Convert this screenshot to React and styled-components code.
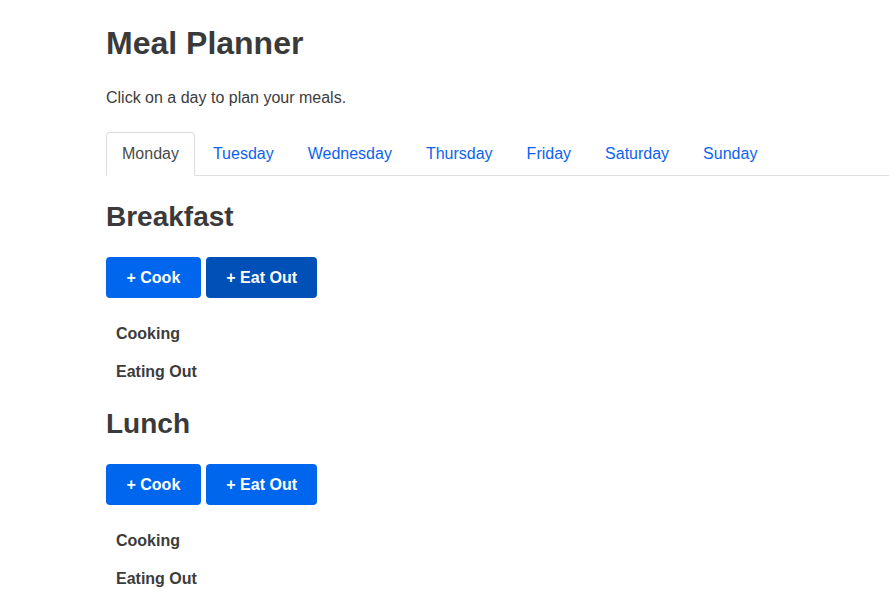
import React, { useState } from 'react';
import styled, { createGlobalStyle } from 'styled-components';

const GlobalStyle = createGlobalStyle`
  body {
    margin: 0;
    font-family: "Liberation Sans", Arial, sans-serif;
    color: #3c3c3c;
    background: #fff;
  }
`;

const Page = styled.div`
  padding: 20px 0 0 106px;
`;

const Title = styled.h1`
  margin: 0;
  font-size: 32px;
  line-height: 46px;
  font-weight: 700;
  color: #3a3a3a;
`;

const Subtitle = styled.p`
  margin: 20px 0 0;
  font-size: 16px;
  line-height: 24px;
  color: #3c3c3c;
`;

const Tabs = styled.ul`
  display: flex;
  list-style: none;
  margin: 22px 0 0;
  padding: 0;
  border-bottom: 1px solid #dedede;
`;

const Tab = styled.li`
  margin: 0 2px -1px 0;
  padding: 10px 15px;
  font-size: 16px;
  line-height: 22px;
  border: 1px solid ${p => (p.$active ? '#dedede' : 'transparent')};
  border-bottom-color: ${p => (p.$active ? '#fff' : 'transparent')};
  border-radius: 4px 4px 0 0;
  background: ${p => (p.$active ? '#fff' : 'transparent')};
  color: ${p => (p.$active ? '#4a4a4a' : '#0d63f0')};
  cursor: pointer;
`;

const Section = styled.section`
  margin-top: 21px;

  & + & {
    margin-top: 20px;
  }
`;

const MealTitle = styled.h2`
  margin: 0;
  font-size: 28px;
  line-height: 40px;
  font-weight: 700;
  color: #3a3a3a;
`;

const ButtonRow = styled.div`
  display: flex;
  gap: 5px;
  margin-top: 20px;
`;

const Button = styled.button`
  height: 41px;
  padding: 0 20.5px;
  border: none;
  border-radius: 4px;
  background: ${p => (p.$active ? '#0050b8' : '#0066ee')};
  color: #fff;
  font-family: "Liberation Sans", Arial, sans-serif;
  font-size: 16px;
  font-weight: 700;
  cursor: pointer;
`;

const List = styled.div`
  display: flex;
  flex-direction: column;
  gap: 14px;
  margin-top: 24px;
  padding-left: 10px;
`;

const Item = styled.div`
  font-size: 16px;
  line-height: 24px;
  font-weight: 700;
  color: #3c3c3c;
`;

const days = ['Monday', 'Tuesday', 'Wednesday', 'Thursday', 'Friday', 'Saturday', 'Sunday'];
const meals = [
  { name: 'Breakfast', active: 'eat' },
  { name: 'Lunch', active: null },
];

function Meal({ name, active }) {
  return (
    <Section>
      <MealTitle>{name}</MealTitle>
      <ButtonRow>
        <Button $active={active === 'cook'}>+ Cook</Button>
        <Button $active={active === 'eat'}>+ Eat Out</Button>
      </ButtonRow>
      <List>
        <Item>Cooking</Item>
        <Item>Eating Out</Item>
      </List>
    </Section>
  );
}

export default function App() {
  const [day, setDay] = useState('Monday');
  return (
    <Page>
      <GlobalStyle />
      <Title>Meal Planner</Title>
      <Subtitle>Click on a day to plan your meals.</Subtitle>
      <Tabs>
        {days.map(d => (
          <Tab key={d} $active={d === day} onClick={() => setDay(d)}>
            {d}
          </Tab>
        ))}
      </Tabs>
      {meals.map(m => (
        <Meal key={m.name} {...m} />
      ))}
    </Page>
  );
}
